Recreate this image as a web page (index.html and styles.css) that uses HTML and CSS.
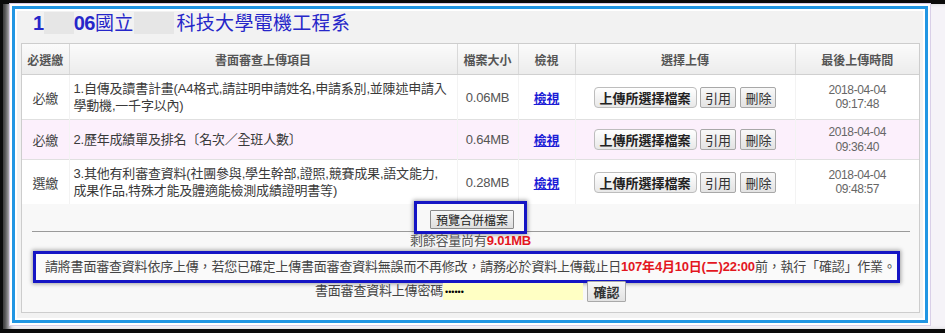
FILE: index.html
```html
<!DOCTYPE html>
<html lang="zh-Hant">
<head>
    <meta charset="UTF-8">
    <meta name="viewport" content="width=device-width, initial-scale=1.0">
    <title>書面審查資料上傳</title>
    <link rel="stylesheet" href="styles.css">
</head>
<body>
    <div class="screen">
        <div class="frame">
            <h1 class="title"><b>1</b><span class="mask m1"></span><b>06</b>國立<span class="mask m2"></span>科技大學電機工程系</h1>

            <div class="panel">
                <table class="files">
                    <colgroup>
                        <col style="width: 47px">
                        <col style="width: 388px">
                        <col style="width: 61px">
                        <col style="width: 57px">
                        <col style="width: 220px">
                        <col style="width: 124px">
                    </colgroup>
                    <thead>
                        <tr>
                            <th>必選繳</th>
                            <th>書面審查上傳項目</th>
                            <th>檔案大小</th>
                            <th>檢視</th>
                            <th>選擇上傳</th>
                            <th>最後上傳時間</th>
                        </tr>
                    </thead>
                    <tbody>
                        <tr>
                            <td>必繳</td>
                            <td class="desc">1.自傳及讀書計畫(A4格式,請註明申請姓名,申請系別,並陳述申請入<br>學動機,一千字以內)</td>
                            <td class="size">0.06MB</td>
                            <td><a href="#" class="view">檢視</a></td>
                            <td class="actions"><button class="btn-upload">上傳所選擇檔案</button> <button class="btn-small">引用</button> <button class="btn-small del">刪除</button></td>
                            <td class="time">2018-04-04<br>09:17:48</td>
                        </tr>
                        <tr class="alt">
                            <td>必繳</td>
                            <td class="desc">2.歷年成績單及排名〔名次／全班人數〕</td>
                            <td class="size">0.64MB</td>
                            <td><a href="#" class="view">檢視</a></td>
                            <td class="actions"><button class="btn-upload">上傳所選擇檔案</button> <button class="btn-small">引用</button> <button class="btn-small del">刪除</button></td>
                            <td class="time">2018-04-04<br>09:36:40</td>
                        </tr>
                        <tr>
                            <td>選繳</td>
                            <td class="desc">3.其他有利審查資料(社團參與,學生幹部,證照,競賽成果,語文能力,<br>成果作品,特殊才能及體適能檢測成績證明書等)</td>
                            <td class="size">0.28MB</td>
                            <td><a href="#" class="view">檢視</a></td>
                            <td class="actions"><button class="btn-upload">上傳所選擇檔案</button> <button class="btn-small">引用</button> <button class="btn-small del">刪除</button></td>
                            <td class="time">2018-04-04<br>09:48:57</td>
                        </tr>
                    </tbody>
                </table>

                <div class="preview">
                    <span class="mark"><button class="btn-plain">預覽合併檔案</button></span>
                </div>
                <hr class="divider">
                <p class="quota">剩餘容量尚有<b class="red">9.01MB</b></p>
                <p class="notice mark">請將書面審查資料依序上傳，若您已確定上傳書面審查資料無誤而不再修改，請務必於資料上傳截止日<b class="red">107年4月10日(二)22:00</b>前，執行「確認」作業。</p>
                <div class="confirm">書面審查資料上傳密碼<input type="password" class="pwd" value="abcdef"><button class="btn-ok">確認</button></div>
            </div>
        </div>
    </div>
</body>
</html>
```

FILE: styles.css
```css
body {
    margin: 0;
    background-color: #0b0b0b;
    font-family: "Liberation Sans", "Noto Sans CJK TC", sans-serif;
    font-size: 13px;
    color: #444;
}
.screen {
    box-sizing: border-box;
    height: 325px;
    margin: 4px 0 0 3px;
    padding: 2px 0 0 9px;
    background-color: #f5f3f8;
    box-shadow: inset 9px 0 6px -4px #333;
}
.frame {
    box-sizing: border-box;
    width: 916px;
    height: 317px;
    padding: 0 5px 0 6px;
    border: 3px solid #2196e3;
    background-color: #f2f2f2;
    box-shadow: inset 0 0 0 2px #fff, 0 0 0 2px #fff, 0 0 0 3px #d9cfe8;
}
.title {
    height: 34px;
    margin: 0;
    padding-left: 12px;
    font-size: 19px;
    font-weight: normal;
    line-height: 28px;
    letter-spacing: 0.3px;
    color: #2626c9;
}
.title b {
    font-family: "Liberation Sans", sans-serif;
    font-size: 20px;
    letter-spacing: -0.5px;
}
.mask {
    display: inline-block;
    height: 22px;
    vertical-align: -4px;
    background-color: #e6e6e6;
}
.m1 {
    width: 30px;
}
.m2 {
    width: 40px;
    margin: 0 2px 0 1px;
}
.panel {
    box-sizing: border-box;
    height: 270px;
    border: 1px solid #cdcdcd;
    background-color: #f8f8f8;
}
.files {
    width: 100%;
    table-layout: fixed;
    border-collapse: collapse;
    background-color: #fff;
}
.files th {
    height: 30px;
    padding: 0;
    font-size: 12px;
    font-weight: bold;
    color: #555;
    background: linear-gradient(#fbfbfb, #ececec);
    border-left: 1px solid #d9d9d9;
    border-bottom: 1px solid #d0d0d0;
}
.files th:first-child {
    border-left: none;
}
.files td {
    padding: 5px 4px;
    text-align: center;
    letter-spacing: -0.2px;
    border-top: 1px solid #e0e0e0;
    border-left: 1px solid #f3f3f3;
}
.files td:first-child {
    border-left: none;
}
.files tr.alt td {
    background-color: #fcf0fc;
}
.files td.desc {
    text-align: left;
    line-height: 17px;
    color: #3a3a3a;
}
.size {
    color: #555;
    letter-spacing: -0.3px;
}
.view {
    font-weight: bold;
    color: #1c1cd6;
}
.actions {
    white-space: nowrap;
}
.time {
    font-size: 12px;
    line-height: 14.5px;
    color: #666;
}
.files td.time {
    letter-spacing: -0.4px;
}
button {
    font-family: "Liberation Sans", "Noto Sans CJK TC", sans-serif;
    cursor: pointer;
    margin: 0;
}
.btn-upload {
    height: 21px;
    padding: 0 5px;
    font-size: 13px;
    font-weight: bold;
    color: #222;
    border: 1px solid #bdbdbd;
    border-radius: 4px;
    background: linear-gradient(#fff, #e8e8e8);
}
.btn-small {
    height: 21px;
    padding: 0 4px;
    font-size: 13px;
    color: #333;
    border: 1px solid #a8a8a8;
    border-radius: 2px;
    background: linear-gradient(#f8f8f8, #e3e3e3);
}
.del {
    margin-left: 1px;
}
.preview {
    display: flex;
    justify-content: center;
    margin-top: -3px;
}
.mark {
    border: 3px solid #1515c4;
    box-shadow: 0 0 4px 1px rgba(0, 0, 0, 0.35);
}
.preview .mark {
    display: inline-block;
    padding: 6px 10px 2px 13px;
}
.btn-plain {
    display: block;
    height: 19px;
    padding: 0 5px;
    font-size: 12px;
    color: #222;
    border: 1px solid #8a8a8a;
    border-radius: 1px;
    background: linear-gradient(#f7f7f7, #dedede);
}
.divider {
    height: 0;
    margin: -3px 9px 0 10px;
    border: none;
    border-top: 1px solid #9a9a9a;
}
.quota {
    margin: 1px 0 0;
    line-height: 16px;
    text-align: center;
    color: #555;
    letter-spacing: -0.2px;
}
.red {
    color: #e3161e;
}
.notice {
    margin: 2px 19px 0 11px;
    padding: 0 9px;
    line-height: 26px;
    white-space: nowrap;
    letter-spacing: -0.2px;
    background-color: #fafafa;
}
.confirm {
    margin-top: -2px;
    text-align: center;
    line-height: 20px;
    color: #444;
    letter-spacing: -0.2px;
}
.pwd {
    box-sizing: border-box;
    width: 140px;
    height: 17px;
    margin: 0;
    padding: 0 2px;
    border: none;
    vertical-align: middle;
    font-size: 9px;
    background-color: #ffffc4;
}
.btn-ok {
    height: 21px;
    width: 39px;
    margin-left: 4px;
    padding: 0;
    font-size: 13px;
    font-weight: bold;
    color: #333;
    vertical-align: middle;
    border: 1px solid #a9a9a9;
    border-radius: 1px;
    background: linear-gradient(#f7f7f7, #e2e2e2);
}
```
